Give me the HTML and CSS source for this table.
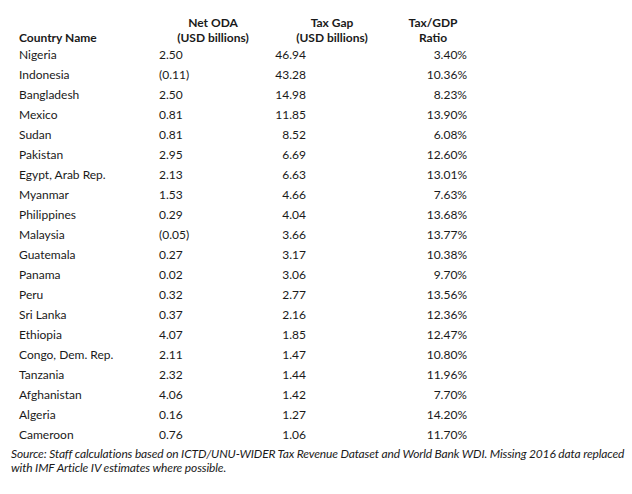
FILE: index.html
```html
<!DOCTYPE html>
<html lang="en">
<head>
<meta charset="utf-8">
<title>Net ODA and Tax Gap</title>
<link rel="stylesheet" href="styles.css">
</head>
<body>
<table class="data">
  <thead>
    <tr>
      <th class="c-name">Country Name</th>
      <th class="c-oda">Net ODA<br>(USD billions)</th>
      <th class="c-gap">Tax Gap<br>(USD billions)</th>
      <th class="c-ratio">Tax/GDP<br>Ratio</th>
    </tr>
  </thead>
  <tbody>
    <tr><td class="c-name">Nigeria</td><td class="c-oda">2.50</td><td class="c-gap">46.94</td><td class="c-ratio">3.40%</td></tr>
    <tr><td class="c-name">Indonesia</td><td class="c-oda">(0.11)</td><td class="c-gap">43.28</td><td class="c-ratio">10.36%</td></tr>
    <tr><td class="c-name">Bangladesh</td><td class="c-oda">2.50</td><td class="c-gap">14.98</td><td class="c-ratio">8.23%</td></tr>
    <tr><td class="c-name">Mexico</td><td class="c-oda">0.81</td><td class="c-gap">11.85</td><td class="c-ratio">13.90%</td></tr>
    <tr><td class="c-name">Sudan</td><td class="c-oda">0.81</td><td class="c-gap">8.52</td><td class="c-ratio">6.08%</td></tr>
    <tr><td class="c-name">Pakistan</td><td class="c-oda">2.95</td><td class="c-gap">6.69</td><td class="c-ratio">12.60%</td></tr>
    <tr><td class="c-name">Egypt, Arab Rep.</td><td class="c-oda">2.13</td><td class="c-gap">6.63</td><td class="c-ratio">13.01%</td></tr>
    <tr><td class="c-name">Myanmar</td><td class="c-oda">1.53</td><td class="c-gap">4.66</td><td class="c-ratio">7.63%</td></tr>
    <tr><td class="c-name">Philippines</td><td class="c-oda">0.29</td><td class="c-gap">4.04</td><td class="c-ratio">13.68%</td></tr>
    <tr><td class="c-name">Malaysia</td><td class="c-oda">(0.05)</td><td class="c-gap">3.66</td><td class="c-ratio">13.77%</td></tr>
    <tr><td class="c-name">Guatemala</td><td class="c-oda">0.27</td><td class="c-gap">3.17</td><td class="c-ratio">10.38%</td></tr>
    <tr><td class="c-name">Panama</td><td class="c-oda">0.02</td><td class="c-gap">3.06</td><td class="c-ratio">9.70%</td></tr>
    <tr><td class="c-name">Peru</td><td class="c-oda">0.32</td><td class="c-gap">2.77</td><td class="c-ratio">13.56%</td></tr>
    <tr><td class="c-name">Sri Lanka</td><td class="c-oda">0.37</td><td class="c-gap">2.16</td><td class="c-ratio">12.36%</td></tr>
    <tr><td class="c-name">Ethiopia</td><td class="c-oda">4.07</td><td class="c-gap">1.85</td><td class="c-ratio">12.47%</td></tr>
    <tr><td class="c-name">Congo, Dem. Rep.</td><td class="c-oda">2.11</td><td class="c-gap">1.47</td><td class="c-ratio">10.80%</td></tr>
    <tr><td class="c-name">Tanzania</td><td class="c-oda">2.32</td><td class="c-gap">1.44</td><td class="c-ratio">11.96%</td></tr>
    <tr><td class="c-name">Afghanistan</td><td class="c-oda">4.06</td><td class="c-gap">1.42</td><td class="c-ratio">7.70%</td></tr>
    <tr><td class="c-name">Algeria</td><td class="c-oda">0.16</td><td class="c-gap">1.27</td><td class="c-ratio">14.20%</td></tr>
    <tr><td class="c-name">Cameroon</td><td class="c-oda">0.76</td><td class="c-gap">1.06</td><td class="c-ratio">11.70%</td></tr>
  </tbody>
</table>
<p class="source">Source: Staff calculations based on ICTD/UNU-WIDER Tax Revenue Dataset and World Bank WDI. Missing 2016 data replaced<br>with IMF Article IV estimates where possible.</p>
</body>
</html>
```

FILE: styles.css
```css
html, body {
  margin: 0;
  padding: 0;
  background: #ffffff;
}

body {
  font-family: Lato, "Open Sans", "Liberation Sans", sans-serif;
  font-size: 12px;
  color: #1a1a1a;
}

.data {
  border-collapse: collapse;
  table-layout: fixed;
  width: 470px;
}

.data th,
.data td {
  padding: 0;
  white-space: nowrap;
}

.data th {
  height: 45px;
  line-height: 14.5px;
  vertical-align: bottom;
  font-weight: 700;
  text-align: center;
}

.data td {
  height: 20px;
  line-height: 20px;
  vertical-align: middle;
}

.c-name {
  width: 139px;
  padding-left: 19px !important;
  text-align: left !important;
}

.c-oda {
  width: 110px;
}

td.c-oda {
  padding-left: 1px !important;
  text-align: left;
}

.c-gap {
  width: 128px;
}

td.c-gap {
  text-align: right;
  padding-right: 90px !important;
}

.c-ratio {
  width: 74px;
}

td.c-ratio {
  text-align: right;
  padding-right: 3px !important;
}

.source {
  margin: 2px 0 0;
  padding-left: 11px;
  font-style: italic;
  line-height: 14px;
  letter-spacing: -0.15px;
  white-space: nowrap;
}
```
